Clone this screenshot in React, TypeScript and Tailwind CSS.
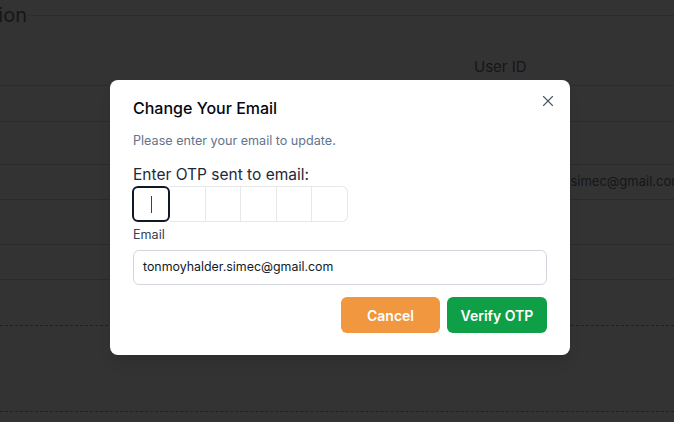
import { X } from "lucide-react";

const rows = [
  { h: "h-[36px]", email: "" },
  { h: "h-[43px]", email: "" },
  { h: "h-[35px]", email: "tonmoyhalder.simec@gmail.com" },
  { h: "h-[45px]", email: "" },
  { h: "h-[35px]", email: "" },
];

const App = () => {
  return (
    <div className="relative w-[674px] h-[422px] overflow-hidden bg-white font-['Inter',sans-serif]">
      {/* page behind the dialog */}
      <div className="flex items-center h-[30px]">
        <div className="w-[27px] overflow-hidden flex justify-end">
          <span className="whitespace-nowrap text-[20px] text-gray-500">Personal Information</span>
        </div>
        <div className="flex-1 ml-[1px] border-t border-gray-300"></div>
      </div>
      <div className="flex items-center h-[56px] border-b border-gray-300 pl-[474px] pt-[20px]">
        <span className="text-[15px] text-gray-500">User ID</span>
      </div>
      {rows.map((row, i) => (
        <div key={i} className={`flex items-center border-b border-gray-300 pl-[483px] ${row.h}`}>
          <span className="whitespace-nowrap text-[13px] text-gray-500">{row.email}</span>
        </div>
      ))}
      <div className="h-[46px] border-b border-dashed border-slate-400"></div>
      <div className="h-[86px] border-b border-dashed border-slate-400"></div>

      {/* overlay */}
      <div className="absolute inset-0 bg-black/80 pl-[110px] pt-[80px]">
        <div className="relative w-[460px] rounded-lg bg-white shadow-lg px-[23px] pt-[16px] pb-[22px]">
          <button className="absolute right-[13px] top-[12px] text-gray-600">
            <X size={18} strokeWidth={1.5} />
          </button>
          <h2 className="text-[16px] leading-[24px] font-medium text-gray-950">Change Your Email</h2>
          <p className="mt-[11px] text-[12.6px] leading-[20px] text-slate-500">Please enter your email to update.</p>
          <p className="mt-[14px] text-[15.5px] leading-[20px] text-gray-800">Enter OTP sent to email:</p>
          <div className="mt-[1px] flex">
            <div className="-ml-px flex items-center justify-center w-[38px] h-[36px] border-2 border-gray-900 rounded-md">
              <div className="w-[1px] h-[17px] bg-gray-700"></div>
            </div>
            {[0, 1, 2, 3, 4].map((i) => (
              <div
                key={i}
                className={`w-[35.6px] h-[36px] border border-l-0 border-gray-200 ${i === 4 ? "rounded-r-md" : ""}`}
              ></div>
            ))}
          </div>
          <p className="mt-[4px] text-[12.6px] leading-[18px] text-gray-700">Email</p>
          <div className="mt-[6px] flex items-center h-[35px] border border-gray-300 rounded-md px-[9px] text-[12.4px] text-gray-900">
            tonmoyhalder.simec@gmail.com
          </div>
          <div className="mt-[12px] flex justify-end gap-[7px]">
            <button className="w-[99px] h-[36px] rounded-md bg-[#f0973f] text-white text-[14px] font-semibold">
              Cancel
            </button>
            <button className="w-[100px] h-[36px] rounded-md bg-[#0e9f47] text-white text-[14px] font-semibold">
              Verify OTP
            </button>
          </div>
        </div>
      </div>
    </div>
  );
};

export default App;
